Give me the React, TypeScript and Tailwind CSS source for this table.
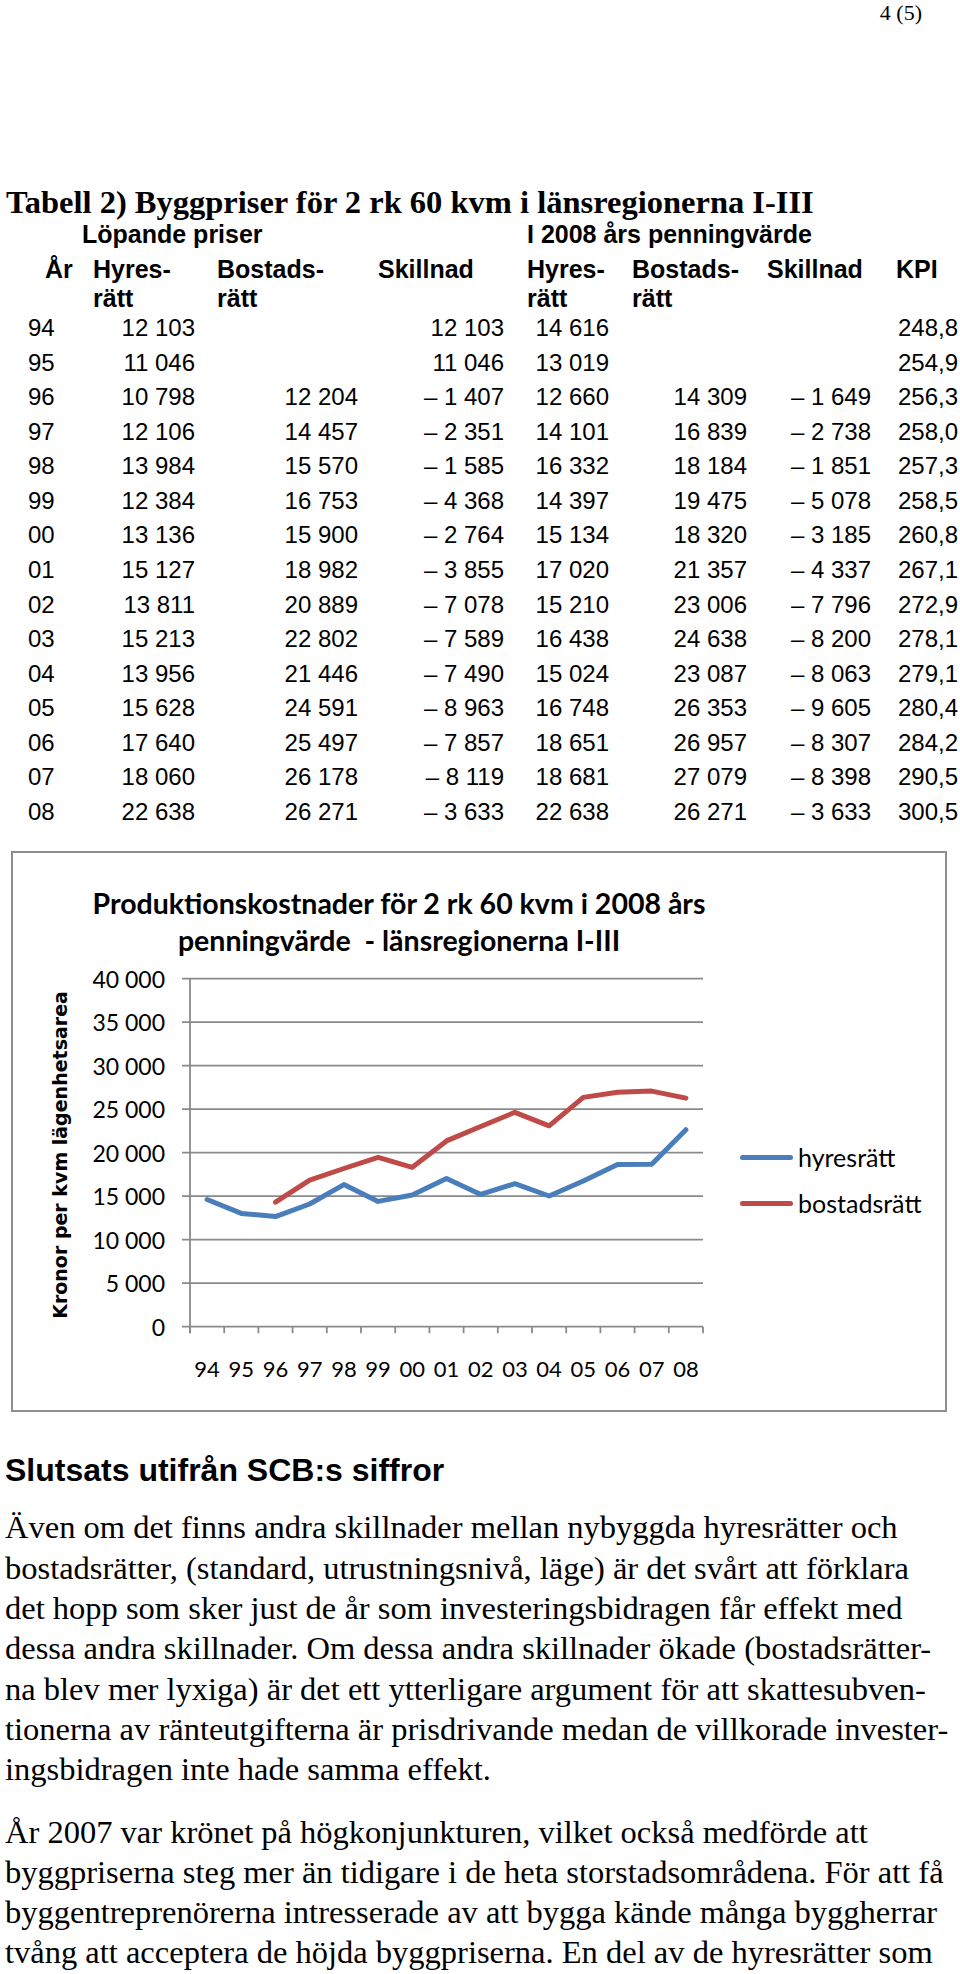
const rows: string[][] = [
  ['94', '12 103', '', '12 103', '14 616', '', '', '248,8'],
  ['95', '11 046', '', '11 046', '13 019', '', '', '254,9'],
  ['96', '10 798', '12 204', '– 1 407', '12 660', '14 309', '– 1 649', '256,3'],
  ['97', '12 106', '14 457', '– 2 351', '14 101', '16 839', '– 2 738', '258,0'],
  ['98', '13 984', '15 570', '– 1 585', '16 332', '18 184', '– 1 851', '257,3'],
  ['99', '12 384', '16 753', '– 4 368', '14 397', '19 475', '– 5 078', '258,5'],
  ['00', '13 136', '15 900', '– 2 764', '15 134', '18 320', '– 3 185', '260,8'],
  ['01', '15 127', '18 982', '– 3 855', '17 020', '21 357', '– 4 337', '267,1'],
  ['02', '13 811', '20 889', '– 7 078', '15 210', '23 006', '– 7 796', '272,9'],
  ['03', '15 213', '22 802', '– 7 589', '16 438', '24 638', '– 8 200', '278,1'],
  ['04', '13 956', '21 446', '– 7 490', '15 024', '23 087', '– 8 063', '279,1'],
  ['05', '15 628', '24 591', '– 8 963', '16 748', '26 353', '– 9 605', '280,4'],
  ['06', '17 640', '25 497', '– 7 857', '18 651', '26 957', '– 8 307', '284,2'],
  ['07', '18 060', '26 178', '– 8 119', '18 681', '27 079', '– 8 398', '290,5'],
  ['08', '22 638', '26 271', '– 3 633', '22 638', '26 271', '– 3 633', '300,5'],
];

// padding per data column so the numbers line up as in the print
const cellPad = ['pl-[28px] text-left', 'pr-[22px] text-right', 'pr-[20px] text-right', 'pr-[23px] text-right', 'pr-[23px] text-right', 'pr-[20px] text-right', 'pr-[25px] text-right', 'pl-[2px] text-left'];

const years = ['94', '95', '96', '97', '98', '99', '00', '01', '02', '03', '04', '05', '06', '07', '08'];
const hyres = [14616, 13019, 12660, 14101, 16332, 14397, 15134, 17020, 15210, 16438, 15024, 16748, 18651, 18681, 22638];
const bostad: (number | null)[] = [null, null, 14309, 16839, 18184, 19475, 18320, 21357, 23006, 24638, 23087, 26353, 26957, 27079, 26271];

// svg starts at page (13, 959)
const PLOT_LEFT = 177;
const PLOT_RIGHT = 690;
const ZERO_Y = 368.7;
const STEP = 34.2;
const yOf = (v: number) => ZERO_Y - v * 0.0087;
const xOf = (i: number) => PLOT_LEFT + STEP * (i + 0.5);

function linePoints(values: (number | null)[]) {
  return values
    .map((v, i) => (v === null ? null : `${xOf(i).toFixed(1)},${yOf(v).toFixed(1)}`))
    .filter(Boolean)
    .join(' ');
}

function Chart() {
  const ticks = [40000, 35000, 30000, 25000, 20000, 15000, 10000, 5000, 0];
  const fmt = (v: number) => (v >= 10000 ? `${String(v).slice(0, 2)} 000` : v === 0 ? '0' : `${String(v).slice(0, 1)} 000`);

  return (
    <div className="ml-[11px] mt-[22px] w-[936px] h-[561px] border-2 border-[#8e8e8e]">
      <div className="pt-[31.6px] w-[772px] text-center font-['Lato',sans-serif] font-bold text-[28.5px] leading-[36.7px] whitespace-pre">
        Produktionskostnader för 2 rk 60 kvm i 2008 års
        <br />
        penningvärde  - länsregionerna I-III
      </div>
      <div className="flex">
        <svg width="720" height="452" viewBox="0 0 720 452">
          <text
            transform="rotate(-90)"
            x={-197}
            y={54}
            textAnchor="middle"
            fontFamily="'DejaVu Sans', sans-serif"
            fontWeight="bold"
            fontSize="19"
            fill="#000"
          >
            Kronor per kvm lägenhetsarea
          </text>
          {ticks.map((t) => (
            <g key={t}>
              <line x1={169} x2={PLOT_RIGHT} y1={yOf(t)} y2={yOf(t)} stroke="#8a8a8a" strokeWidth="1.8" />
              <text x={152} y={yOf(t) + 9} textAnchor="end" fontFamily="Lato, sans-serif" fontSize="23" fill="#000">
                {fmt(t)}
              </text>
            </g>
          ))}
          <line x1={PLOT_LEFT} x2={PLOT_LEFT} y1={yOf(40000)} y2={ZERO_Y + 6.5} stroke="#8a8a8a" strokeWidth="1.8" />
          {Array.from({ length: 16 }, (_, k) => (
            <line key={k} x1={PLOT_LEFT + STEP * k} x2={PLOT_LEFT + STEP * k} y1={ZERO_Y} y2={ZERO_Y + 6.5} stroke="#8a8a8a" strokeWidth="1.8" />
          ))}
          {years.map((y, i) => (
            <text key={y} x={xOf(i)} y={419} textAnchor="middle" fontFamily="Lato, sans-serif" fontSize="22" fill="#000">
              {y}
            </text>
          ))}
          <polyline points={linePoints(hyres)} fill="none" stroke="#4a7ebb" strokeWidth="5" strokeLinejoin="round" strokeLinecap="round" />
          <polyline points={linePoints(bostad)} fill="none" stroke="#be4b48" strokeWidth="5" strokeLinejoin="round" strokeLinecap="round" />
        </svg>
        <div className="ml-[7px] mt-[176px] font-['Lato',sans-serif] text-[25px]">
          <div className="h-[46px] flex items-center">
            <span className="w-[53px] h-[5px] rounded-full bg-[#4a7ebb]" />
            <span className="ml-[5px]">hyresrätt</span>
          </div>
          <div className="h-[46px] flex items-center">
            <span className="w-[53px] h-[5px] rounded-full bg-[#be4b48]" />
            <span className="ml-[5px]">bostadsrätt</span>
          </div>
        </div>
      </div>
    </div>
  );
}

export default function App() {
  return (
    <div className="w-[960px] h-[1974px] overflow-hidden bg-white text-black">
      <div className="h-[24px] pt-[1px] pr-[38px] text-right font-['Liberation_Serif',serif] text-[22px] leading-[24px]">4 (5)</div>

      <h1 className="mt-[160px] pl-[6px] font-['Liberation_Serif',serif] font-bold text-[32.5px] leading-[36px] whitespace-nowrap">
        Tabell 2) Byggpriser för 2 rk 60 kvm i länsregionerna I-III
      </h1>

      <div className="font-['Liberation_Sans',Arial,sans-serif] whitespace-nowrap">
        <div className="grid grid-cols-[93px_124px_161px_149px_105px_135px_129px_64px] h-[35px] text-[25px] leading-[29px] font-bold">
          <div className="col-span-4 pl-[82px]">Löpande priser</div>
          <div className="col-span-4">I 2008 års penningvärde</div>
        </div>
        <div className="grid grid-cols-[93px_124px_161px_149px_105px_135px_129px_64px] h-[56px] text-[25px] leading-[29px] font-bold">
          <div className="pl-[45px]">År</div>
          <div>Hyres-<br />rätt</div>
          <div>Bostads-<br />rätt</div>
          <div>Skillnad</div>
          <div>Hyres-<br />rätt</div>
          <div>Bostads-<br />rätt</div>
          <div>Skillnad</div>
          <div>KPI</div>
        </div>
        {rows.map((r) => (
          <div key={r[0]} className="grid grid-cols-[93px_124px_161px_149px_105px_135px_129px_64px] h-[34.57px] text-[24px] leading-[34.57px]">
            {r.map((c, i) => (
              <div key={i} className={cellPad[i]}>
                {c}
              </div>
            ))}
          </div>
        ))}
      </div>

      <Chart />

      <h2 className="mt-[38px] pl-[5px] font-['Liberation_Sans',Arial,sans-serif] font-bold text-[32px] leading-[40px]">
        Slutsats utifrån SCB:s siffror
      </h2>

      <div className="pl-[5px] font-['Liberation_Serif',serif] text-[32.5px] leading-[40.3px] whitespace-nowrap">
        <p className="mt-[17px]">
          Även om det finns andra skillnader mellan nybyggda hyresrätter och
          <br />
          bostadsrätter, (standard, utrustningsnivå, läge) är det svårt att förklara
          <br />
          det hopp som sker just de år som investeringsbidragen får effekt med
          <br />
          dessa andra skillnader. Om dessa andra skillnader ökade (bostadsrätter-
          <br />
          na blev mer lyxiga) är det ett ytterligare argument för att skattesubven-
          <br />
          tionerna av ränteutgifterna är prisdrivande medan de villkorade invester-
          <br />
          ingsbidragen inte hade samma effekt.
        </p>
        <p className="mt-[22px]">
          År 2007 var krönet på högkonjunkturen, vilket också medförde att
          <br />
          byggpriserna steg mer än tidigare i de heta storstadsområdena. För att få
          <br />
          byggentreprenörerna intresserade av att bygga kände många byggherrar
          <br />
          tvång att acceptera de höjda byggpriserna. En del av de hyresrätter som
        </p>
      </div>
    </div>
  );
}
